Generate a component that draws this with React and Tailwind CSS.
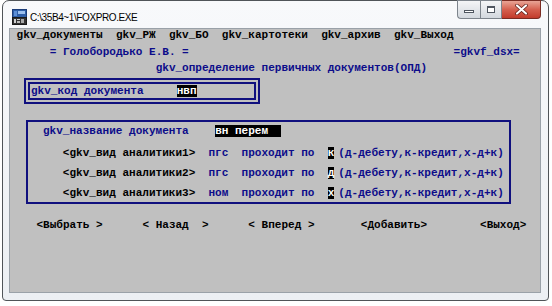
import React from 'react';

// one console line, fixed 12px cell row
const Line = ({ className = '', children }) => (
  <div className={`h-[12px] leading-[12px] whitespace-pre ${className}`}>{children}</div>
);

const Inv = ({ children }) => <span className="bg-black text-white">{children}</span>;

const Blue = ({ children }) => <span className="text-[#0c0c8a]">{children}</span>;

const TitleIcon = () => (
  <svg width="15" height="16" viewBox="0 0 15 16">
    <rect x="0.5" y="0.5" width="14" height="8" fill="#2f5fa8" stroke="#1c3c78" />
    <rect x="6" y="2" width="7" height="3" fill="#9cc0ee" />
    <rect x="2" y="2" width="3" height="5" fill="#5d8fd6" />
    <rect x="0.5" y="8.5" width="14" height="7" fill="#333" stroke="#1a1a1a" />
    <rect x="2" y="10" width="2" height="4" fill="#d0d0d0" />
    <rect x="5" y="10" width="3" height="1" fill="#d0d0d0" />
    <rect x="5" y="12" width="3" height="2" fill="#bdbdbd" />
    <rect x="9" y="10" width="3" height="4" fill="#a8a8a8" />
  </svg>
);

const CaptionButtons = () => (
  <div className="flex -mt-[1px] mr-[7px]">
    <div className="w-[23px] h-[19px] flex items-end justify-center pb-[5px] rounded-bl-[4px] border border-[#7d848c] border-r-0 bg-gradient-to-b from-[#f4f5f7] to-[#d3d8de]">
      <div className="w-[10px] h-[3px] border border-[#4f5660] bg-white" />
    </div>
    <div className="w-[22px] h-[19px] flex items-center justify-center border border-[#7d848c] bg-gradient-to-b from-[#f4f5f7] to-[#d3d8de]">
      <div className="w-[8px] h-[7px] border border-[#4f5660] border-t-2 bg-white" />
    </div>
    <div className="w-[39px] h-[19px] flex items-center justify-center rounded-br-[4px] border border-[#7a2b22] border-l-0 bg-gradient-to-b from-[#e8a496] via-[#d5604f] to-[#c23a2b]">
      <svg width="13" height="11" viewBox="0 0 13 11">
        <path d="M2 1.5 L11 9.5 M11 1.5 L2 9.5" stroke="#5a1a14" strokeWidth="3.6" strokeLinecap="round" />
        <path d="M2 1.5 L11 9.5 M11 1.5 L2 9.5" stroke="#ffffff" strokeWidth="2.2" strokeLinecap="round" />
      </svg>
    </div>
  </div>
);

const analytic = [
  { n: '1', code: 'пгс', flag: 'к' },
  { n: '2', code: 'пгс', flag: 'д' },
  { n: '3', code: 'ном', flag: 'х' },
];

export default function App() {
  return (
    <div className="w-[552px] h-[306px] bg-white overflow-hidden">
      <div className="ml-[2px] w-[547px] h-[301px] flex flex-col rounded-t-[7px] rounded-b-[4px] border border-[#505458] bg-gradient-to-b from-[#f8f9fb] to-[#eceff3]">
        {/* title bar */}
        <div className="h-[27px] flex items-start justify-between">
          <div className="flex items-center pl-[9px] pt-[8px]">
            <TitleIcon />
            <span className="ml-[3px] text-[10px] tracking-[-0.4px] text-black font-['Liberation_Sans',Arial,sans-serif]">
              C:\35B4~1\FOXPRO.EXE
            </span>
          </div>
          <CaptionButtons />
        </div>

        {/* console */}
        <div className="ml-[6px] w-[532px] h-[265px] border border-[#9aa1a8] bg-[#c0c0c0] font-['Liberation_Mono','DejaVu_Sans_Mono',monospace] font-bold text-[11.04px] text-black">
          <Line>{' gkv_документы  gkv_РЖ  gkv_БО  gkv_картотеки  gkv_архив  gkv_Выход'}</Line>

          <Line className="mt-[5px]">
            <Blue>{'      = Голобородько Е.В. ='}</Blue>
            <Blue>{'                                        =gkvf_dsx='}</Blue>
          </Line>
          <Line className="mt-[4px]">
            <Blue>{'                      gkv_определение первичных документов(ОПД)'}</Blue>
          </Line>

          <div className="mt-[4px] ml-[14px] w-[236px] h-[26px] border-[6px] border-double border-[#10107e] flex items-center">
            <Line className="ml-[1px]">
              <Blue>{'gkv_код документа     '}</Blue>
              <Inv>{'нвп'}</Inv>
            </Line>
          </div>

          <div className="mt-[16px] ml-[16px] w-[485px] h-[84px] border-2 border-[#10107e] pl-[15px]">
            <Line className="mt-[3px]">
              <Blue>{'gkv_название документа    '}</Blue>
              <Inv>{'вн перем  '}</Inv>
            </Line>
            {analytic.map((a, i) => (
              <Line key={a.n} className={i === 0 ? 'mt-[10px]' : 'mt-[8px]'}>
                {`   <gkv_вид аналитики${a.n}>  `}
                <Blue>{`${a.code}  проходит по  `}</Blue>
                <Inv>{a.flag}</Inv>
                <span className="ml-[4px] text-[#0c0c8a]">(д-дебету,к-кредит,х-д+к)</span>
              </Line>
            ))}
          </div>

          <Line className="mt-[15px]">
            {'    <Выбрать >      < Назад  >      < Вперед >       <Добавить>        <Выход>'}
          </Line>
        </div>
      </div>
    </div>
  );
}
